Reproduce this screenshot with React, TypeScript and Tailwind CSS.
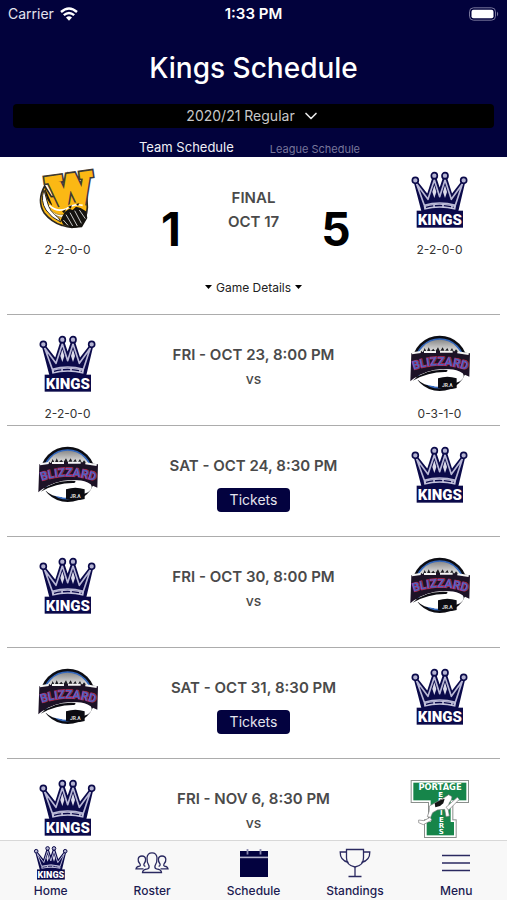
import { useState, type ReactNode } from 'react'
import { ChevronDown } from 'lucide-react'

type Team = 'wheat' | 'kings' | 'blizzard' | 'terriers'

interface Game {
  id: number
  when: string
  away: Team
  home: Team
  awayRecord?: string
  homeRecord?: string
  tickets?: boolean
}

const GAMES: Game[] = [
  { id: 1, when: 'FRI - OCT 23, 8:00 PM', away: 'kings', home: 'blizzard', awayRecord: '2-2-0-0', homeRecord: '0-3-1-0' },
  { id: 2, when: 'SAT - OCT 24, 8:30 PM', away: 'blizzard', home: 'kings', tickets: true },
  { id: 3, when: 'FRI - OCT 30, 8:00 PM', away: 'kings', home: 'blizzard' },
  { id: 4, when: 'SAT - OCT 31, 8:30 PM', away: 'blizzard', home: 'kings', tickets: true },
  { id: 5, when: 'FRI - NOV 6, 8:30 PM', away: 'kings', home: 'terriers' },
]

function KingsLogo({ className }: { className: string }) {
  const knobs = [
    [16, 31],
    [73, 17],
    [105, 17],
    [161, 31],
  ]
  return (
    <svg viewBox="0 0 180 180" className={className} role="img" aria-label="Kings">
      <path
        d="M17 36 L39 121 H140 L160 36 L124 82 L105 22 L89 70 L73 22 L54 82 Z"
        fill="#0b0a4a"
        stroke="#0b0a4a"
        strokeWidth="11"
        strokeLinejoin="round"
      />
      <path
        d="M20 42 L43 106 Q89 92 136 106 L157 42 L124 88 L105 30 L89 80 L73 30 L54 88 Z"
        fill="#0b0a4a"
        stroke="#b9b8d6"
        strokeWidth="5"
        strokeLinejoin="round"
      />
      <path d="M67 66 L73 46 L79 66 L73 84 Z M99 66 L105 46 L111 66 L105 84 Z" fill="#dcdbea" />
      <path d="M41 108 Q89 94 138 108 L136 119 Q89 108 43 119 Z" fill="#c3c2dc" />
      <path d="M48 112 Q89 101 131 112" fill="none" stroke="#0b0a4a" strokeWidth="4" strokeDasharray="22 5" />
      {knobs.map(([x, y]) => (
        <circle key={x} cx={x} cy={y} r="9" fill="#b4b3d2" stroke="#0b0a4a" strokeWidth="5" />
      ))}
      <rect x="20" y="122" width="139" height="51" fill="#0b0a4a" />
      <text x="89.5" y="164" textAnchor="middle" fontFamily="Roboto, sans-serif" fontWeight="900" fontSize="45" fill="#fff">
        KINGS
      </text>
    </svg>
  )
}

function BlizzardLogo({ className }: { className: string }) {
  return (
    <svg viewBox="0 0 180 180" className={className} role="img" aria-label="Blizzard">
      <defs>
        <linearGradient id="bz-sky" x1="0" y1="0" x2="0" y2="1">
          <stop offset="0" stopColor="#858585" />
          <stop offset="0.3" stopColor="#f2f2f2" />
          <stop offset="1" stopColor="#ffffff" />
        </linearGradient>
        <path id="bz-arc" d="M0 112 Q90 76 182 112" />
      </defs>
      <circle cx="89" cy="88" r="83" fill="#0c0c12" />
      <circle cx="89" cy="88" r="73" fill="url(#bz-sky)" stroke="#3468bd" strokeWidth="5" />
      <path
        d="M22 66 L34 50 L38 56 L44 42 L50 54 L56 40 L62 52 L70 44 L76 52 L84 40 L90 52 L98 40 L104 52 L112 42 L118 54 L126 42 L132 54 L138 46 L156 66 L156 80 L22 80 Z"
        fill="#1d1d22"
      />
      <path d="M4 58 Q90 44 180 58 L178 128 Q90 80 10 134 L1 142 Z" fill="#1c1226" />
      <path d="M6 58 L32 54 M42 54 H78 M90 53 H128 M142 55 L176 60" stroke="#f4f4f4" strokeWidth="6" />
      <text
        fontFamily="Roboto, sans-serif"
        fontWeight="700"
        fontSize="35"
        fill="#4f60c0"
        stroke="#b02c58"
        strokeWidth="4"
        paintOrder="stroke"
        textAnchor="middle"
      >
        <textPath href="#bz-arc" startOffset="50%">
          BLIZZARD
        </textPath>
      </text>
      <path
        d="M8 138 Q50 104 112 106 Q138 104 158 118 Q168 130 150 142 Q110 160 70 156 Q40 154 24 138 Z"
        fill="#fff"
      />
      <path d="M8 140 Q44 104 112 108 Q114 114 104 114 Q54 114 8 140 Z" fill="#0c0c12" />
      <path d="M84 133 Q112 124 140 133 V162 Q112 170 84 162 Z" fill="#0c0c12" />
      <text x="112" y="159" textAnchor="middle" fontFamily="Roboto, sans-serif" fontWeight="700" fontSize="15" fill="#ddd">
        JR.A
      </text>
    </svg>
  )
}

function WheatLogo({ className }: { className: string }) {
  return (
    <svg viewBox="0 0 180 180" className={className} role="img" aria-label="Wheat City">
      <path
        d="M20 48 Q-4 92 18 128 Q40 156 72 166 Q104 178 128 166 Q146 146 148 112 L146 70 L40 80 Z"
        fill="#fbb814"
        stroke="#2a2722"
        strokeWidth="5"
      />
      <path d="M18 60 Q6 92 24 120 Q40 144 68 156 L62 144 Q34 124 28 96 Z" fill="#fff" stroke="#2a2722" strokeWidth="3" />
      <path d="M20 52 L44 108 Q22 92 20 52 Z" fill="#15130f" />
      <g
        transform="rotate(-8 96 60)"
        textAnchor="middle"
        fontFamily="'DejaVu Serif', serif"
        fontWeight="700"
        fontSize="116"
        strokeLinejoin="miter"
      >
        <text x="97" y="102" fill="#3d3a35" stroke="#3d3a35" strokeWidth="22">
          W
        </text>
        <text x="97" y="102" fill="#fbb814" stroke="#fbb814" strokeWidth="12">
          W
        </text>
      </g>
      <path d="M42 96 L60 112 L84 108 L106 98 L140 96 L144 112 L90 132 L44 118 Z" fill="#fbb814" />
      <path d="M34 106 Q56 128 86 116 Q108 100 134 106" fill="none" stroke="#fff" strokeWidth="5" />
      <path d="M36 118 Q54 138 80 134 L70 142 Q48 138 36 118 Z" fill="#fff" stroke="#8d7430" strokeWidth="2" />
      <path
        d="M80 126 L94 116 L104 120 L114 110 L128 114 L144 124 L148 144 L132 172 L102 174 L76 164 L68 150 Z"
        fill="#15130f"
      />
      <path
        d="M84 134 L104 168 M96 128 L118 168 M110 122 L130 160 M124 120 L142 146 M76 150 L90 166"
        stroke="#c9c9c9"
        strokeWidth="3"
      />
      <path d="M72 124 L84 118 L78 130 Z M90 110 L102 106 L98 116 Z M114 102 L124 100 L120 108 Z" fill="#15130f" />
    </svg>
  )
}

function TerriersLogo({ className }: { className: string }) {
  return (
    <svg viewBox="0 0 180 180" className={className} role="img" aria-label="Portage Terriers">
      <g fill="#8a8f8c">
        <rect x="2" y="6" width="175" height="69" />
        <rect x="54" y="70" width="76" height="112" />
        <rect x="42" y="124" width="98" height="56" />
      </g>
      <g fill="#fff">
        <rect x="5" y="9" width="169" height="63" />
        <rect x="57" y="70" width="70" height="104" />
        <rect x="45" y="127" width="92" height="50" />
      </g>
      <g fill="#16854a">
        <rect x="10" y="14" width="159" height="53" />
        <rect x="62" y="60" width="60" height="110" />
        <rect x="50" y="132" width="82" height="40" />
      </g>
      <g fontFamily="'DejaVu Sans', sans-serif" fontWeight="700" fill="#fff" textAnchor="middle">
        <text x="90" y="37" fontSize="25">
          PORTAGE
        </text>
        <g fontSize="21">
          <text x="92" y="57">E</text>
          <text x="92" y="76">R</text>
          <text x="94" y="110">I</text>
          <text x="94" y="131">E</text>
          <text x="94" y="150">R</text>
          <text x="94" y="169">S</text>
        </g>
      </g>
      <path
        d="M104 58 L116 50 L126 56 L124 66 L118 74 L114 90 L118 114 L108 116 L104 94 L82 96 L68 104 L62 118 L52 116 L58 98 L58 84 L76 74 L92 66 Z"
        fill="#fff"
        stroke="#777"
        strokeWidth="2"
      />
      <path d="M74 76 L92 66 L104 62 L100 76 L90 84 L76 88 Z" fill="#141414" />
      <path d="M108 88 L142 58 L148 64 L116 96 Z M60 118 L66 126 L40 140 L26 134 L26 126 L42 128 Z" fill="#fff" stroke="#777" strokeWidth="2" />
    </svg>
  )
}

function TeamLogo({ team }: { team: Team }) {
  if (team === 'wheat') return <WheatLogo className="size-15 overflow-visible" />
  if (team === 'blizzard') return <BlizzardLogo className="size-15 overflow-visible" />
  if (team === 'terriers') return <TerriersLogo className="size-15" />
  return <KingsLogo className="size-15" />
}

function TeamColumn({ team, record }: { team: Team; record?: string }) {
  return (
    <div className="flex w-[121px] shrink-0 flex-col items-center gap-[10px]">
      <TeamLogo team={team} />
      <p className="h-5 text-xs leading-5 text-[#333]">{record}</p>
    </div>
  )
}

function GameRow({ game }: { game: Game }) {
  return (
    <li className="flex border-b border-[#acacac] pt-[19px] pb-px">
      <TeamColumn team={game.away} record={game.awayRecord} />
      <div className="flex flex-1 flex-col items-center pt-[9px] text-[#4a4a4a]">
        <p className="text-[15px] leading-6 font-semibold whitespace-nowrap">{game.when}</p>
        {game.tickets ? (
          <button type="button" className="mt-[10px] h-6 rounded-sm bg-[#03023f] px-[13px] text-sm text-[#e4e4ee]">
            Tickets
          </button>
        ) : (
          <p className="text-sm leading-6 font-medium">vs</p>
        )}
      </div>
      <TeamColumn team={game.home} record={game.homeRecord} />
    </li>
  )
}

function FinalGame() {
  return (
    <li className="border-b border-[#acacac] pt-[13px] pb-4">
      <div className="flex">
        <TeamColumn team="wheat" record="2-2-0-0" />
        <p className="w-[86px] pt-9 text-center text-[46px] leading-none font-bold text-black">1</p>
        <div className="flex-1 pt-4 text-center text-[15px] leading-6 font-semibold whitespace-nowrap text-[#4a4a4a]">
          <p>FINAL</p>
          <p>OCT 17</p>
        </div>
        <p className="w-[86px] pt-9 text-center text-[46px] leading-none font-bold text-black">5</p>
        <TeamColumn team="kings" record="2-2-0-0" />
      </div>
      <button type="button" className="mx-auto mt-[18px] flex h-5 items-center gap-1 text-xs text-[#222]">
        <Caret />
        Game Details
        <Caret />
      </button>
    </li>
  )
}

function Caret() {
  return (
    <svg viewBox="0 0 7 6" className="h-1.5 w-[7px]" aria-hidden="true">
      <path d="M0 0 H7 L3.5 4 Z" fill="#000" />
    </svg>
  )
}

function WifiIcon() {
  return (
    <svg viewBox="0 0 18 14" className="h-[14px] w-[18px]" aria-hidden="true">
      <g fill="none" stroke="#fff" strokeWidth="2.4">
        <path d="M1 5 Q9 -2 17 5" />
        <path d="M3.8 8.2 Q9 3.6 14.2 8.2" />
      </g>
      <path d="M6 10.6 Q9 8 12 10.6 L9 13.8 Z" fill="#fff" />
    </svg>
  )
}

function BatteryIcon() {
  return (
    <svg viewBox="0 0 31 15" className="h-[15px] w-[31px]" role="img" aria-label="Battery">
      <rect x="1.5" y="0.8" width="26" height="12.4" rx="4" fill="none" stroke="#77769b" />
      <rect x="3.5" y="2.8" width="22" height="8.4" rx="2" fill="#fff" />
      <path d="M29 4.5 Q31.4 7 29 9.5 Z" fill="#77769b" />
    </svg>
  )
}

function RosterIcon() {
  return (
    <svg viewBox="0 0 34 24" className="h-6 w-[34px]" fill="none" stroke="#2a2960" strokeWidth="1.3" aria-hidden="true">
      <path d="M7.5 21.5 Q7.5 18.6 12.5 17.8 Q14.6 17.2 14 14.8 Q11.6 11 12 6.8 Q12.4 1.8 17 1.8 Q21.6 1.8 22 6.8 Q22.4 11 20 14.8 Q19.4 17.2 21.5 17.8 Q26.5 18.6 26.5 21.5 Z" />
      <path d="M8.5 17.8 H1 Q1.4 15.6 4.6 15.2 Q5.8 14.6 5 13 Q2.8 11 3.2 8 Q3.6 5 7 5 Q10.2 5 10.6 8 Q10.8 11 9 13 Q8.4 14.8 10.4 15.4" />
      <path d="M25.5 17.8 H33 Q32.6 15.6 29.4 15.2 Q28.2 14.6 29 13 Q31.2 11 30.8 8 Q30.4 5 27 5 Q23.8 5 23.4 8 Q23.2 11 25 13 Q25.6 14.8 23.6 15.4" />
    </svg>
  )
}

function ScheduleIcon() {
  return (
    <svg viewBox="0 0 28 28" className="size-7" aria-hidden="true">
      <rect x="0" y="2" width="28" height="26" fill="#03023f" />
      <rect x="0" y="7.6" width="28" height="1.6" fill="#b4b3cc" />
      <path d="M7.5 0 V5.5 M20.5 0 V5.5" stroke="#8d8cb0" strokeWidth="1.8" />
    </svg>
  )
}

function TrophyIcon() {
  return (
    <svg viewBox="0 0 32 30" className="h-[30px] w-8" fill="none" stroke="#2a2960" strokeWidth="1.3" aria-hidden="true">
      <path d="M7.5 1.5 H24.5 V10 Q24.5 17.5 16 19 Q7.5 17.5 7.5 10 Z" />
      <path d="M7.5 4 H1.2 Q1 12.5 9.4 14.4 M24.5 4 H30.8 Q31 12.5 22.6 14.4" />
      <path d="M16 19 V28.5 M9.5 28.5 H22.5" />
    </svg>
  )
}

function MenuIcon() {
  return (
    <svg viewBox="0 0 28 20" className="h-5 w-7" stroke="#2a2960" strokeWidth="1.4" aria-hidden="true">
      <path d="M0 2.5 H28 M0 10 H28 M0 17.5 H28" />
    </svg>
  )
}

function NavItem({ label, children }: { label: string; children: ReactNode }) {
  return (
    <a href={`#${label.toLowerCase()}`} className="flex flex-1 flex-col items-center gap-0.5">
      <span className="flex h-9 items-center">{children}</span>
      <span className="text-xs leading-4 font-medium text-[#1c1b52]">{label}</span>
    </a>
  )
}

export default function App() {
  const [tab, setTab] = useState<'team' | 'league'>('team')
  const active = 'text-[13px] text-[#f0f0f6]'
  const inactive = 'text-[11px] text-[#77769b]'

  return (
    <div className="flex h-screen flex-col bg-white font-[Inter,sans-serif]">
      <header className="shrink-0 bg-[#02023c] text-white">
        <div className="grid h-7 grid-cols-3 items-center px-2 text-[15px]">
          <span className="flex items-center gap-1.5 text-sm text-[#e4e4ee]">
            Carrier
            <WifiIcon />
          </span>
          <span className="text-center font-semibold">1:33 PM</span>
          <span className="justify-self-end">
            <BatteryIcon />
          </span>
        </div>
        <h1 className="mt-5 text-center text-[28px] leading-10 font-medium">Kings Schedule</h1>
        <div className="mx-[13px] mt-4 flex h-6 items-center justify-center gap-1.5 rounded-sm bg-black text-[#c8c8c8]">
          <select
            aria-label="Season"
            className="cursor-pointer appearance-none bg-transparent text-sm leading-6 [field-sizing:content] focus:outline-none"
          >
            <option>2020/21 Regular</option>
          </select>
          <ChevronDown className="size-5 text-[#e8e8e8]" strokeWidth={2} aria-hidden="true" />
        </div>
        <div className="flex h-[29px] items-end justify-center gap-9 pr-2" role="tablist">
          <button type="button" role="tab" aria-selected={tab === 'team'} onClick={() => setTab('team')} className={tab === 'team' ? active : inactive}>
            Team Schedule
          </button>
          <button type="button" role="tab" aria-selected={tab === 'league'} onClick={() => setTab('league')} className={tab === 'league' ? active : inactive}>
            League Schedule
          </button>
        </div>
      </header>

      <main className="min-h-0 flex-1 overflow-y-auto [scrollbar-width:none]">
        <ul className="px-[7px]">
          <FinalGame />
          {GAMES.map((game) => (
            <GameRow key={game.id} game={game} />
          ))}
        </ul>
      </main>

      <nav className="flex shrink-0 border-t border-[#d8d8d8] bg-[#f8f8f8] pt-1 pb-px">
        <NavItem label="Home">
          <KingsLogo className="size-9" />
        </NavItem>
        <NavItem label="Roster">
          <RosterIcon />
        </NavItem>
        <NavItem label="Schedule">
          <ScheduleIcon />
        </NavItem>
        <NavItem label="Standings">
          <TrophyIcon />
        </NavItem>
        <NavItem label="Menu">
          <MenuIcon />
        </NavItem>
      </nav>
    </div>
  )
}
